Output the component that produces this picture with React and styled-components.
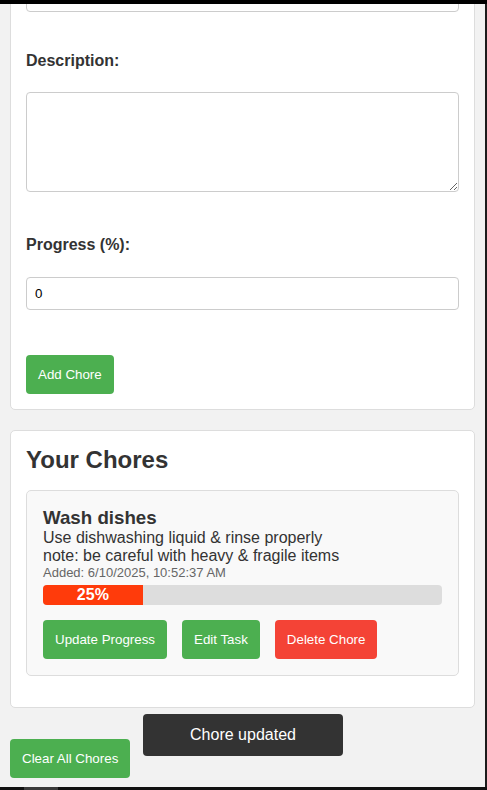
import styled, { createGlobalStyle } from "styled-components";

const GlobalStyle = createGlobalStyle`
  html, body {
    margin: 0;
    padding: 0;
    background: #000;
  }
  body {
    font-family: "Liberation Sans", Arial, sans-serif;
    color: #333;
  }
`;

const chores = [
  {
    id: 1,
    title: "Wash dishes",
    lines: [
      "Use dishwashing liquid & rinse properly",
      "note: be careful with heavy & fragile items",
    ],
    added: "6/10/2025, 10:52:37 AM",
    progress: 25,
  },
];

const App = () => {
  return (
    <>
      <GlobalStyle />
      <Frame>
        <Viewport>
          <Page>
            <Card>
              {/* page is scrolled down: the top of the form lies above the view */}
              <Input type="text" defaultValue="" aria-label="Chore name" />
              <Label>Description:</Label>
              <TextArea />
              <Label $after>Progress (%):</Label>
              <Input type="number" defaultValue="0" />
              <Button $top="45px">Add Chore</Button>
            </Card>

            <Card>
              <Heading>Your Chores</Heading>
              <List>
                {chores.map(({ id, title, lines, added, progress }) => (
                  <Item key={id}>
                    <Title>{title}</Title>
                    {lines.map((l) => (
                      <Desc key={l}>{l}</Desc>
                    ))}
                    <Added>Added: {added}</Added>
                    <Bar>
                      <Fill style={{ width: `${progress}%` }}>{progress}%</Fill>
                    </Bar>
                    <Actions>
                      <Button>Update Progress</Button>
                      <Button>Edit Task</Button>
                      <Button $danger>Delete Chore</Button>
                    </Actions>
                  </Item>
                ))}
              </List>
            </Card>

            <Button $top="31px">Clear All Chores</Button>
          </Page>
          <Toast>Chore updated</Toast>
        </Viewport>
        <Edge />
      </Frame>
      <BottomBar>
        <Tab />
      </BottomBar>
    </>
  );
};

const Frame = styled.div`
  display: flex;
  width: 487px;
  height: 787px;
  padding-top: 4px;
  box-sizing: border-box;
  background: #000;
`;
const Viewport = styled.div`
  position: relative;
  width: 485px;
  height: 783px;
  overflow: hidden;
  background: #f2f2f2;
  display: flex;
  flex-direction: column;
  justify-content: flex-end;
`;
const Edge = styled.div`
  flex: 1;
  background: #1c1c1c;
`;
const BottomBar = styled.div`
  height: 3px;
  width: 487px;
  background: #111;
  position: relative;
`;
const Tab = styled.div`
  position: absolute;
  left: 24px;
  top: 0;
  width: 34px;
  height: 3px;
  background: #3a3a3a;
`;
const Page = styled.div`
  flex-shrink: 0;
  padding: 0 10px 9px;
`;
const Card = styled.section`
  background: #fff;
  border: 1px solid #ddd;
  border-radius: 5px;
  padding: 15px;
  & + & {
    margin-top: 20px;
  }
`;
const Heading = styled.h2`
  margin: 0 0 16px;
  font-size: 24px;
  font-weight: bold;
  line-height: normal;
  color: #333;
`;
const Label = styled.label`
  display: block;
  margin: ${(p) => (p.$after ? "44px" : "40px")} 0 ${(p) => (p.$after ? "23px" : "22px")};
  font-size: 16px;
  font-weight: bold;
  line-height: normal;
`;
const Input = styled.input`
  display: block;
  width: 100%;
  box-sizing: border-box;
  padding: 8px;
  height: 33px;
  border: 1px solid #ccc;
  border-radius: 4px;
  font-family: "Liberation Sans", Arial, sans-serif;
  font-size: 13.33px;
  color: #000;
  background: #fff;
`;
const TextArea = styled.textarea`
  display: block;
  width: 100%;
  height: 100px;
  box-sizing: border-box;
  padding: 8px;
  border: 1px solid #ccc;
  border-radius: 4px;
  font-family: "Liberation Sans", Arial, sans-serif;
  font-size: 13.33px;
  resize: vertical;
`;
const Button = styled.button`
  display: block;
  margin-top: ${(p) => p.$top || "0"};
  height: 39px;
  padding: 0 12px;
  border: none;
  border-radius: 4px;
  background: ${(p) => (p.$danger ? "#f44336" : "#4caf50")};
  color: #fff;
  font-family: "Liberation Sans", Arial, sans-serif;
  font-size: 13.33px;
  cursor: pointer;
`;
const List = styled.div`
  margin-bottom: 16px;
`;
const Item = styled.article`
  background: #f9f9f9;
  border: 1px solid #ddd;
  border-radius: 5px;
  padding: 16px;
`;
const Title = styled.h3`
  margin: 0;
  font-size: 18.72px;
  font-weight: bold;
  line-height: normal;
  color: #333;
`;
const Desc = styled.div`
  font-size: 16px;
  line-height: normal;
`;
const Added = styled.div`
  font-size: 13px;
  line-height: 15px;
  color: #666;
`;
const Bar = styled.div`
  margin-top: 5px;
  height: 20px;
  background: #ddd;
  border-radius: 4px;
  overflow: hidden;
`;
const Fill = styled.div`
  height: 100%;
  background: #ff3b0b;
  color: #fff;
  font-size: 16px;
  font-weight: bold;
  line-height: 20px;
  text-align: center;
`;
const Actions = styled.div`
  display: flex;
  gap: 15px;
  margin-top: 15px;
`;
const Toast = styled.div`
  position: absolute;
  left: calc(50% - 99.5px);
  bottom: 31px;
  width: 200px;
  height: 42px;
  display: flex;
  align-items: center;
  justify-content: center;
  background: #333;
  color: #fff;
  font-size: 16px;
  border-radius: 4px;
`;

export default App;
